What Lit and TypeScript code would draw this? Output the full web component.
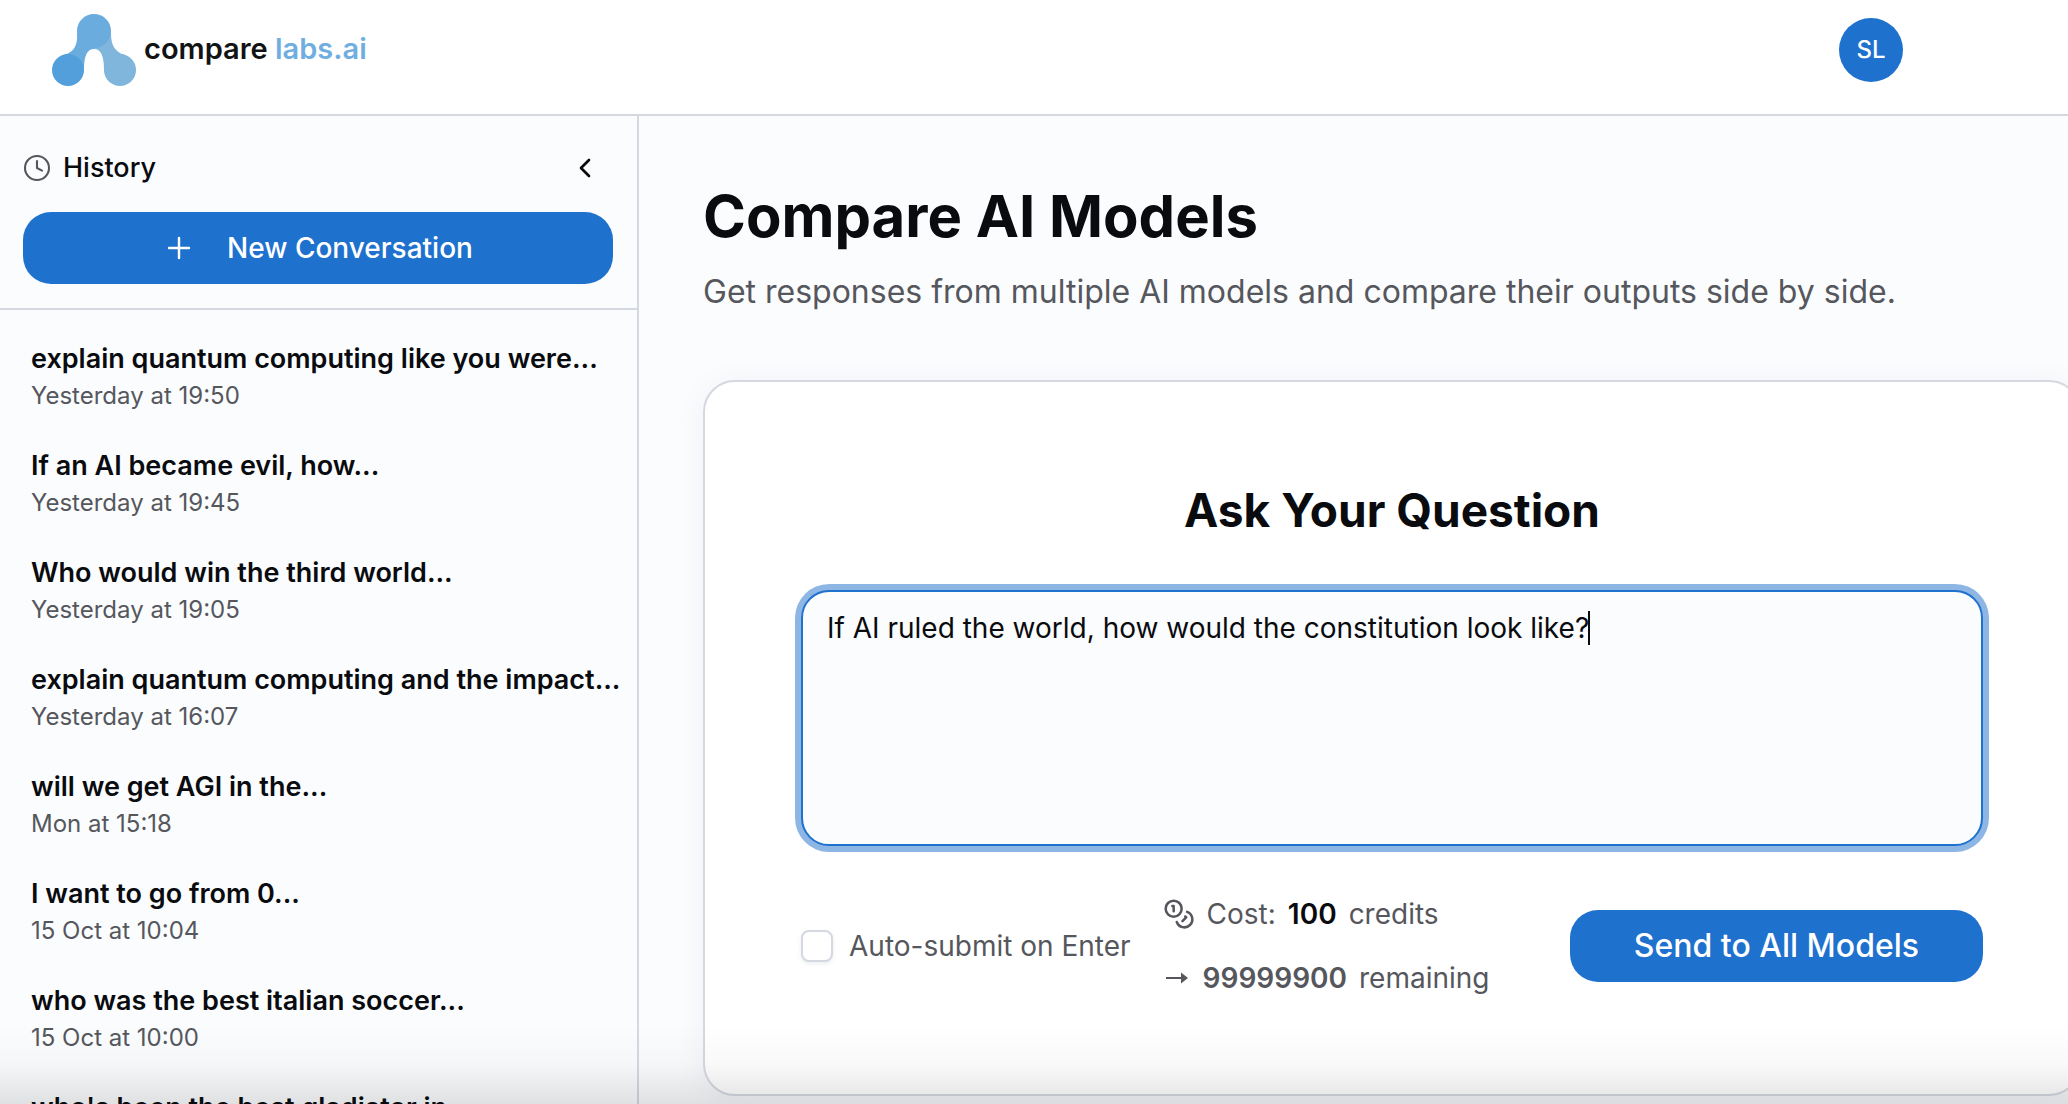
import { LitElement, html, css, svg } from "lit";
import { customElement, state } from "lit/decorators.js";
import { styleMap } from "lit/directives/style-map.js";

interface Conversation {
  title: string;
  when: string;
}

const conversations: Conversation[] = [
  { title: "explain quantum computing like you were...", when: "Yesterday at 19:50" },
  { title: "If an AI became evil, how...", when: "Yesterday at 19:45" },
  { title: "Who would win the third world...", when: "Yesterday at 19:05" },
  { title: "explain quantum computing and the impact...", when: "Yesterday at 16:07" },
  { title: "will we get AGI in the...", when: "Mon at 15:18" },
  { title: "I want to go from 0...", when: "15 Oct at 10:04" },
  { title: "who was the best italian soccer...", when: "15 Oct at 10:00" },
  { title: "who's been the best gladiator in...", when: "" },
];

const logoMark = svg`
  <path d="M59 19C59 30 62 38 73 41L68 56H52C52 42 49 35 42 35L44 22Z" fill="#80b5dc"/>
  <path d="M25 19C26 31 22 38 12 41L16 56H32C32 42 35 35 42 35L46 22Z" fill="#69acdd"/>
  <circle cx="42" cy="17" r="17" fill="#69acdd"/>
  <circle cx="16" cy="56" r="16" fill="#529fdc"/>
  <circle cx="68" cy="56" r="16" fill="#80b5dc"/>`;

@customElement("app-root")
export class AppRoot extends LitElement {
  @state() private question = "If AI ruled the world, how would the constitution look like?";

  static styles = css`
    :host {
      display: flex;
      flex-direction: column;
      position: relative;
      height: 100vh;
      overflow: hidden;
      background: #fbfcfe;
      color: #090b0f;
      font-family: Inter, "Liberation Sans", sans-serif;
      font-size: 28px;
      line-height: 40px;
    }
    * { box-sizing: border-box; }
    h1, h2, p, ul { margin: 0; padding: 0; }
    button, textarea { font: inherit; }
    button { border: 0; cursor: pointer; }
    svg { display: block; flex: none; }

    .header {
      display: flex;
      flex: none;
      align-items: flex-start;
      justify-content: space-between;
      height: 116px;
      padding: 14px 165px 0 52px;
      background: #fff;
      border-bottom: 2px solid #d6d8e1;
    }
    .logo {
      display: flex;
      gap: 8px;
      color: #111315;
      font-size: 29px;
      font-weight: 600;
      line-height: 70px;
      text-decoration: none;
    }
    .logo-domain { color: #71aee0; }
    .avatar {
      width: 64px;
      height: 64px;
      margin-top: 4px;
      padding: 0;
      border-radius: 50%;
      background: #1f71ce;
      color: #fff;
      font-size: 24px;
      font-weight: 500;
    }

    .body { display: flex; flex: 1; min-height: 0; }
    .sidebar {
      flex: none;
      width: 639px;
      overflow: hidden;
      border-right: 2px solid #d6d8e1;
    }
    .side-top {
      padding: 32px 24px 24px 23px;
      border-bottom: 2px solid #d6d8e1;
    }
    .side-head {
      display: flex;
      align-items: center;
      justify-content: space-between;
      height: 40px;
      margin-bottom: 24px;
    }
    .side-title {
      display: flex;
      align-items: center;
      gap: 12px;
      font-size: 27px;
      font-weight: 500;
    }
    .muted-icon { color: #55575d; }
    .collapse { padding: 0 22px; background: none; color: inherit; }
    .primary {
      height: 72px;
      border-radius: 28px;
      background: #1f71ce;
      color: #fff;
      font-weight: 500;
    }
    .new {
      display: flex;
      width: 100%;
      align-items: center;
      justify-content: center;
      gap: 36px;
      padding: 0 0 0 4px;
    }
    .list { list-style: none; padding-top: 13px; }
    .entry {
      display: block;
      width: 100%;
      height: 107px;
      padding: 16px 0 17px 31px;
      background: none;
      color: inherit;
      text-align: left;
      white-space: nowrap;
    }
    .entry-title { display: block; font-size: 27px; font-weight: 600; }
    .entry-when { display: block; height: 34px; color: #55575d; font-size: 24px; line-height: 34px; }

    .main { flex: 1; min-width: 0; padding: 64px 0 0 64px; }
    .title { font-size: 58px; font-weight: 700; line-height: 72px; }
    .subtitle { margin-top: 16px; color: #55575d; font-size: 32px; line-height: 48px; }
    .card {
      margin: 64px -13px 0 0;
      padding: 96px;
      background: #fff;
      border: 2px solid #d6d8e1;
      border-radius: 32px;
      box-shadow: 0 4px 32px rgba(30, 40, 80, 0.05);
    }
    .card-title {
      margin-bottom: 48px;
      font-size: 46px;
      font-weight: 700;
      line-height: 64px;
      text-align: center;
    }
    .field { position: relative; }
    .question {
      display: block;
      width: 100%;
      height: 256px;
      padding: 16px 24px;
      resize: none;
      border: 2px solid #1f71ce;
      border-radius: 28px;
      outline: none;
      background: #fbfcfe;
      box-shadow: 0 0 0 6px #8eb6e5;
      color: inherit;
      caret-color: transparent;
    }
    .caret {
      position: absolute;
      top: 21px;
      width: 2px;
      height: 34px;
      margin-left: 25px;
      background: #090b0f;
      pointer-events: none;
    }
    .actions {
      display: flex;
      align-items: center;
      margin-top: 48px;
      color: #55575d;
    }
    .auto { display: flex; align-items: center; gap: 16px; }
    .check {
      width: 32px;
      height: 32px;
      margin: 0;
      appearance: none;
      border: 2px solid #d6d8e1;
      border-radius: 8px;
      background: #fff;
      box-shadow: 0 2px 4px rgba(30, 40, 80, 0.08);
    }
    .cost { display: grid; gap: 24px; margin-left: 32px; }
    .cost-row { display: flex; align-items: center; gap: 12px; }
    .cost-value { color: #090b0f; font-weight: 600; }
    .left-value { font-weight: 600; }
    .send { margin-left: auto; padding: 0 64px; font-size: 32px; }
    .fade {
      position: absolute;
      inset: auto 0 0 0;
      height: 80px;
      pointer-events: none;
      background: linear-gradient(rgba(0, 0, 0, 0), rgba(0, 0, 0, 0.025) 50%, rgba(0, 0, 0, 0.11));
    }
  `;

  private textWidth(text: string): number {
    const context = document.createElement("canvas").getContext("2d");
    if (!context) return 0;
    context.font = "28px Inter, 'Liberation Sans', sans-serif";
    return Math.round(context.measureText(text).width);
  }

  protected firstUpdated() {
    this.renderRoot.querySelector<HTMLTextAreaElement>(".question")?.focus();
  }

  render() {
    return html`
      <header class="header">
        <a class="logo" href="#">
          <svg width="84" height="72" viewBox="0 0 84 72">${logoMark}</svg>
          <span>compare <span class="logo-domain">labs.ai</span></span>
        </a>
        <button class="avatar">SL</button>
      </header>
      <div class="body">
        <aside class="sidebar">
          <div class="side-top">
            <div class="side-head">
              <h2 class="side-title">
                <svg class="muted-icon" width="28" height="28" viewBox="0 0 28 28" fill="none" stroke="currentColor" stroke-width="2.1" stroke-linecap="round" stroke-linejoin="round">
                  <circle cx="14" cy="14" r="12"/><path d="M14 7v7l5 2.6"/>
                </svg>
                History
              </h2>
              <button class="collapse" aria-label="Collapse history">
                <svg width="12" height="20" viewBox="0 0 12 20" fill="none" stroke="currentColor" stroke-width="2.7" stroke-linecap="round" stroke-linejoin="round"><path d="M10 2 2 10l8 8"/></svg>
              </button>
            </div>
            <button class="primary new">
              <svg width="24" height="24" viewBox="0 0 24 24" fill="none" stroke="currentColor" stroke-width="2.4" stroke-linecap="round"><path d="M12 2v20M2 12h20"/></svg>
              New Conversation
            </button>
          </div>
          <ul class="list">
            ${conversations.map(
              (c) => html`<li><button class="entry"><span class="entry-title">${c.title}</span><span class="entry-when">${c.when}</span></button></li>`
            )}
          </ul>
        </aside>
        <main class="main">
          <h1 class="title">Compare AI Models</h1>
          <p class="subtitle">Get responses from multiple AI models and compare their outputs side by side.</p>
          <section class="card">
            <h2 class="card-title">Ask Your Question</h2>
            <div class="field">
              <textarea class="question" aria-label="Your question" .value=${this.question}
                @input=${(e: Event) => (this.question = (e.target as HTMLTextAreaElement).value)}></textarea>
              <span class="caret" style=${styleMap({ left: `${this.textWidth(this.question)}px` })}></span>
            </div>
            <div class="actions">
              <label class="auto"><input class="check" type="checkbox" />Auto-submit on Enter</label>
              <div class="cost">
                <div class="cost-row">
                  <svg width="32" height="32" viewBox="0 0 24 24" fill="none" stroke="currentColor" stroke-width="1.9" stroke-linecap="round" stroke-linejoin="round">
                    <circle cx="8" cy="8" r="6"/><path d="M18.09 10.37A6 6 0 1 1 10.34 18M7 6h1v4M16.71 13.88l.7.71-2.82 2.82"/>
                  </svg>
                  <span>Cost:</span><span class="cost-value">100</span><span>credits</span>
                </div>
                <div class="cost-row">
                  <svg width="28" height="16" viewBox="0 0 28 16" fill="currentColor" role="img" aria-label="leaves">
                    <path d="M3 6.9h15.5v2.2H3zM18 2.6 25 8l-7 5.4Z"/>
                  </svg>
                  <span class="left-value">99999900</span><span>remaining</span>
                </div>
              </div>
              <button class="primary send">Send to All Models</button>
            </div>
          </section>
        </main>
      </div>
      <div class="fade"></div>
    `;
  }
}
